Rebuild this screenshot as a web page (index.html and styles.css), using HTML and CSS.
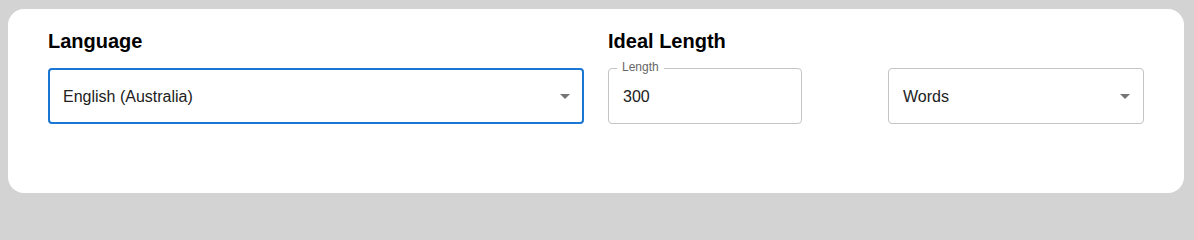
FILE: index.html
```html
<!DOCTYPE html>
<html lang="en">
<head>
<meta charset="utf-8">
<title>Settings</title>
<link rel="stylesheet" href="styles.css">
</head>
<body>
  <div class="card">
    <div class="column">
      <h2 class="heading">Language</h2>
      <div class="select focused">
        <span class="value">English (Australia)</span>
        <svg class="arrow" viewBox="0 0 24 24" width="24" height="24"><path d="M7 10l5 5 5-5z"/></svg>
      </div>
    </div>
    <div class="column">
      <h2 class="heading">Ideal Length</h2>
      <div class="row">
        <div class="input length">
          <span class="label">Length</span>
          <span class="value">300</span>
        </div>
        <div class="select words">
          <span class="value">Words</span>
          <svg class="arrow" viewBox="0 0 24 24" width="24" height="24"><path d="M7 10l5 5 5-5z"/></svg>
        </div>
      </div>
    </div>
  </div>
</body>
</html>
```

FILE: styles.css
```css
html, body {
  margin: 0;
}
body {
  background: #d3d3d3;
  padding: 9px 10px 13px 8px;
  font-family: "Liberation Sans", Arial, Helvetica, sans-serif;
}
.card {
  background: #ffffff;
  border-radius: 16px;
  padding: 20px 40px 69px 40px;
  display: grid;
  grid-template-columns: 536px 536px;
  column-gap: 24px;
}
.heading {
  margin: 0 0 15px 0;
  font-size: 20px;
  line-height: 24px;
  font-weight: 700;
  color: #000000;
}
.select, .input {
  box-sizing: border-box;
  height: 56px;
  border: 1px solid #c4c4c4;
  border-radius: 4px;
  display: flex;
  align-items: center;
  padding: 0 6px 0 14px;
  position: relative;
}
.select.focused {
  border: 2px solid #1976d2;
  padding: 0 5px 0 13px;
}
.value {
  flex: 1;
  font-size: 16px;
  line-height: 23px;
  color: #212121;
}
.arrow {
  flex: none;
  fill: #757575;
}
.row {
  display: flex;
  justify-content: space-between;
}
.length {
  width: 194px;
}
.words {
  width: 256px;
}
.label {
  position: absolute;
  left: 8px;
  top: -9px;
  padding: 0 5px;
  background: #ffffff;
  font-size: 12px;
  line-height: 14px;
  color: #666666;
}
```
